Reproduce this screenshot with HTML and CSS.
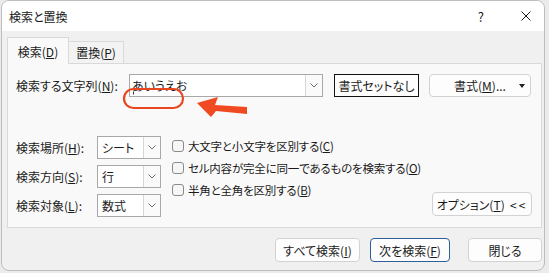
FILE: index.html
```html
<!DOCTYPE html>
<html lang="ja">
<head>
    <meta charset="UTF-8">
    <title>検索と置換</title>
    <link rel="stylesheet" href="styles.css">
</head>
<body>
    <div class="window">
        <!-- タイトルバー -->
        <div class="titlebar">
            <span class="title">検索と置換</span>
            <span class="help">?</span>
            <span class="close">
                <svg width="10" height="10" viewBox="0 0 10 10"><path d="M0.5 0.5 L9.5 9.5 M9.5 0.5 L0.5 9.5" stroke="#1a1a1a" stroke-width="1" fill="none"/></svg>
            </span>
        </div>

        <div class="main">
            <!-- タブ -->
            <div class="tabs">
                <div class="tab active">検索(<u>D</u>)</div>
                <div class="tab">置換(<u>P</u>)</div>
            </div>

            <div class="panel">
                <div class="find-row">
                    <label class="find-label">検索する文字列(<u>N</u>):</label>
                    <div class="combo find-combo">
                        <span class="combo-text">あいうえお</span>
                        <span class="combo-arrow"><svg width="8" height="5" viewBox="0 0 8 5"><path d="M0.5 0.5 L4 4 L7.5 0.5" stroke="#6e6e6e" fill="none"/></svg></span>
                    </div>
                    <button class="btn btn-noformat">書式セットなし</button>
                    <button class="btn btn-format">書式(<u>M</u>)...<span class="caret"></span></button>
                </div>

                <div class="options">
                    <div class="selects">
                        <div class="select-row">
                            <label class="select-label">検索場所(<u>H</u>):</label>
                            <div class="combo small-combo">
                                <span class="combo-text">シート</span>
                                <span class="combo-arrow"><svg width="8" height="5" viewBox="0 0 8 5"><path d="M0.5 0.5 L4 4 L7.5 0.5" stroke="#6e6e6e" fill="none"/></svg></span>
                            </div>
                        </div>
                        <div class="select-row">
                            <label class="select-label">検索方向(<u>S</u>):</label>
                            <div class="combo small-combo">
                                <span class="combo-text">行</span>
                                <span class="combo-arrow"><svg width="8" height="5" viewBox="0 0 8 5"><path d="M0.5 0.5 L4 4 L7.5 0.5" stroke="#6e6e6e" fill="none"/></svg></span>
                            </div>
                        </div>
                        <div class="select-row">
                            <label class="select-label">検索対象(<u>L</u>):</label>
                            <div class="combo small-combo">
                                <span class="combo-text">数式</span>
                                <span class="combo-arrow"><svg width="8" height="5" viewBox="0 0 8 5"><path d="M0.5 0.5 L4 4 L7.5 0.5" stroke="#6e6e6e" fill="none"/></svg></span>
                            </div>
                        </div>
                    </div>

                    <div class="checks">
                        <label class="check"><span class="box"></span>大文字と小文字を区別する(<u>C</u>)</label>
                        <label class="check"><span class="box"></span>セル内容が完全に同一であるものを検索する(<u>O</u>)</label>
                        <label class="check"><span class="box"></span>半角と全角を区別する(<u>B</u>)</label>
                    </div>

                    <button class="btn btn-options">オプション(<u>T</u>)&nbsp; <span class="chev">&lt;&lt;</span></button>
                </div>
            </div>

            <!-- 下部ボタン -->
            <div class="footer">
                <button class="btn btn-findall">すべて検索(<u>I</u>)</button>
                <button class="btn btn-next">次を検索(<u>F</u>)</button>
                <button class="btn btn-close">閉じる</button>
            </div>
        </div>
    </div>

    <!-- 注釈（赤い丸と矢印） -->
    <svg class="annotation" width="135" height="36" viewBox="0 0 135 36">
        <rect x="15" y="7.5" width="1" height="3" fill="#333"/>
        <rect x="6" y="5" width="59" height="19" rx="9.5" ry="9.5" fill="none" stroke="#e9471f" stroke-width="2.2"/>
        <polygon points="79,19 100,13 97,21 129,23 129,30 98,27 93,33" fill="#f04a22"/>
    </svg>
</body>
</html>
```

FILE: styles.css
```css
body {
    margin: 0;
    width: 549px;
    height: 273px;
    overflow: hidden;
    position: relative;
    background-color: #ebebeb;
    font-family: "Noto Sans CJK JP", "Noto Sans", sans-serif;
    font-size: 12px;
    font-feature-settings: "palt";
    color: #1a1a1a;
}
u {
    text-decoration-thickness: 1px;
    text-underline-offset: 1px;
}
.window {
    margin-left: 1px;
    width: 542px;
    height: 269px;
    border: 1px solid #bdbdbd;
    border-radius: 8px;
    background-color: #f0f0f0;
    display: flex;
    flex-direction: column;
    overflow: hidden;
}
.titlebar {
    height: 30px;
    background-color: #ffffff;
    display: flex;
    align-items: center;
}
.title {
    padding-left: 7px;
}
.help {
    margin-left: auto;
    font-size: 13px;
}
.close {
    display: flex;
    margin-left: 37px;
    margin-right: 13px;
}
.main {
    flex: 1;
    padding: 6px 2px 0 5px;
}
.tabs {
    display: flex;
    align-items: flex-end;
    height: 26px;
}
.tab {
    height: 22px;
    width: 55px;
    line-height: 21px;
    text-align: center;
    border-top: 1px solid #d9d9d9;
    border-right: 1px solid #d9d9d9;
    background-color: #f3f3f3;
    box-sizing: border-box;
}
.tab.active {
    position: relative;
    z-index: 1;
    height: 27px;
    width: 62px;
    line-height: 27px;
    margin-bottom: -1px;
    border-left: 1px solid #d9d9d9;
    background-color: #f9f9f9;
}
.panel {
    border: 1px solid #d9d9d9;
    background-color: #f9f9f9;
    padding: 10px 9px 10px 8px;
}
.find-row {
    display: flex;
    height: 23px;
}
.find-label {
    width: 113px;
    line-height: 23px;
}
.combo {
    display: flex;
    box-sizing: border-box;
    height: 23px;
    border: 1px solid #a8a8a8;
    background-color: #ffffff;
}
.combo-text {
    flex: 1;
    padding-left: 2px;
    line-height: 21px;
}
.combo-arrow {
    width: 16px;
    border-left: 1px solid #d6d6d6;
    background-color: #fafafa;
    display: flex;
    align-items: center;
    justify-content: center;
}
.find-combo {
    width: 194px;
}
.small-combo {
    width: 64px;
}
.small-combo .combo-text {
    padding-left: 4px;
}
.btn {
    font-family: inherit;
    font-size: 12px;
    font-feature-settings: "palt";
    color: #1a1a1a;
    height: 24px;
    padding: 0;
    border: 1px solid #d2d2d2;
    border-radius: 4px;
    background-color: #fdfdfd;
    box-sizing: border-box;
    white-space: nowrap;
}
.btn-noformat {
    margin-left: 11px;
    width: 85px;
    height: 23px;
    border: 1px solid #111111;
    border-radius: 0;
}
.btn-format {
    position: relative;
    margin-left: 10px;
    width: 102px;
    height: 23px;
}
.caret {
    position: absolute;
    right: 5px;
    top: 9px;
    border-left: 3px solid transparent;
    border-right: 3px solid transparent;
    border-top: 4px solid #222222;
}
.options {
    display: flex;
    margin-top: 39px;
}
.selects {
    display: flex;
    flex-direction: column;
    gap: 6px;
    flex-shrink: 0;
}
.select-row {
    display: flex;
    height: 23px;
}
.select-label {
    width: 81px;
    line-height: 23px;
}
.checks {
    display: flex;
    flex-direction: column;
    flex-shrink: 0;
    margin-left: 11px;
    margin-top: -1px;
    white-space: nowrap;
    font-size: 11.5px;
    letter-spacing: -0.2px;
}
.check {
    display: flex;
    align-items: center;
    height: 22px;
}
.box {
    width: 12px;
    height: 12px;
    box-sizing: border-box;
    border: 1px solid #8a8a8a;
    border-radius: 3px;
    background-color: #f6f6f6;
    margin-right: 4px;
}
.btn-options {
    margin-left: auto;
    align-self: flex-end;
    margin-bottom: 1px;
    width: 100px;
    flex-shrink: 0;
}
.chev {
    letter-spacing: 2px;
}
.footer {
    display: flex;
    justify-content: flex-end;
    margin-top: 10px;
}
.btn-findall {
    width: 85px;
}
.btn-next {
    width: 80px;
    margin-left: 10px;
    border-color: #2f5f98;
}
.btn-close {
    width: 74px;
    margin-left: 18px;
}
.annotation {
    position: absolute;
    left: 118px;
    top: 84px;
}
```
